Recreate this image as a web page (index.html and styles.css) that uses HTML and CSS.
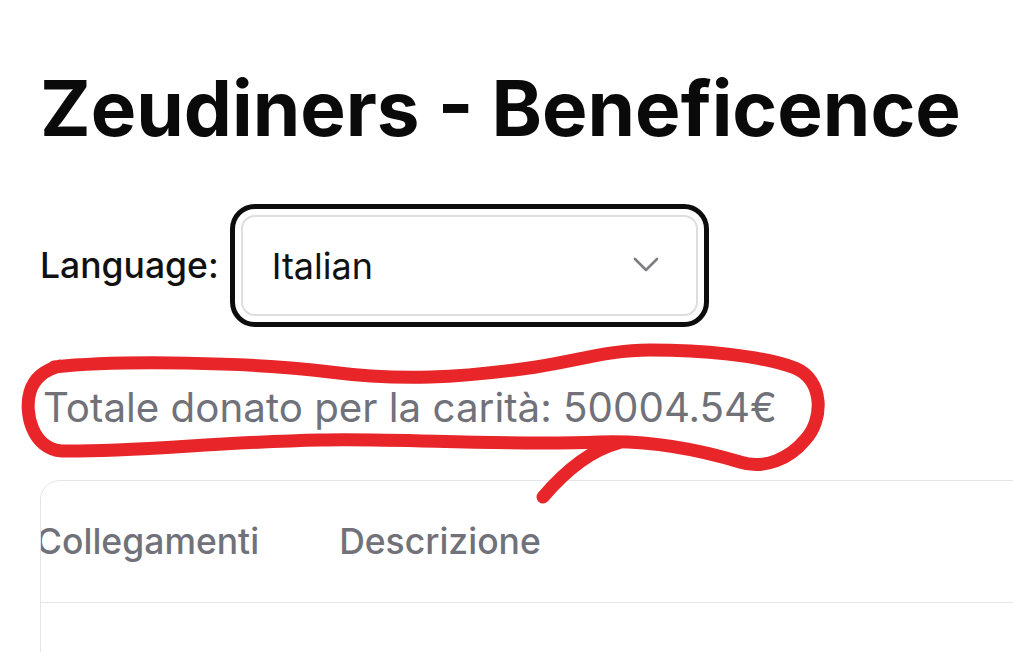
FILE: index.html
```html
<!DOCTYPE html>
<html lang="it">
<head>
<meta charset="utf-8">
<title>Zeudiners - Beneficence</title>
<link rel="stylesheet" href="styles.css">
</head>
<body>
<main class="page">
  <h1 class="title">Zeudiners - Beneficence</h1>

  <div class="lang-row">
    <label class="lang-label" for="lang">Language:</label>
    <div class="select-wrap">
      <select id="lang" class="lang-select">
        <option>Italian</option>
        <option>English</option>
      </select>
      <svg class="chevron" width="26" height="16" viewBox="0 0 26 16" aria-hidden="true">
        <path d="M2 2 L13 13 L24 2" fill="none" stroke="#7d7d82" stroke-width="2.6" stroke-linecap="round" stroke-linejoin="round"/>
      </svg>
    </div>
  </div>

  <p class="total">Totale donato per la carità: 50004.54€</p>

  <div class="card">
    <div class="scroller">
      <table class="links">
        <thead>
          <tr>
            <th>Collegamenti</th>
            <th>Descrizione</th>
          </tr>
        </thead>
        <tbody>
          <tr class="empty-row"><td></td><td></td></tr>
        </tbody>
      </table>
    </div>
  </div>
</main>

<svg class="scribble" width="1013" height="652" viewBox="0 0 1013 652" aria-hidden="true">
  <path d="M 54 367
           C 120 360, 250 362, 330 372
           C 400 381, 460 378, 536 367
           C 580 360, 610 350, 650 350
           C 700 350, 760 355, 795 368
           C 824 380, 824 420, 805 440
           C 790 458, 765 470, 740 462
           C 700 450, 650 440, 600 442
           C 500 446, 400 438, 320 440
           C 220 442, 130 452, 62 451
           C 32 449, 24 412, 30 392
           C 34 378, 44 370, 60 366"
        fill="none" stroke="#e8262a" stroke-width="13" stroke-linecap="round" stroke-linejoin="round"/>
  <path d="M 618 443 C 592 450, 566 470, 543 497"
        fill="none" stroke="#e8262a" stroke-width="13" stroke-linecap="round" stroke-linejoin="round"/>
</svg>
</body>
</html>
```

FILE: styles.css
```css
html, body {
  margin: 0;
  padding: 0;
  background: #ffffff;
  overflow: hidden;
}

body {
  font-family: Inter, "Noto Sans", "Liberation Sans", sans-serif;
  color: #0a0a0a;
  position: relative;
  width: 1013px;
  height: 652px;
}

.page {
  padding: 0 0 0 40px;
}

.title {
  margin: 63px 0 0;
  font-size: 76.4px;
  line-height: 90px;
  font-weight: 700;
  letter-spacing: 0;
  white-space: nowrap;
}

.lang-row {
  display: flex;
  align-items: center;
  margin-top: 62px;
  gap: 22px;
}

.lang-label {
  font-size: 35.5px;
  font-weight: 500;
  color: #111111;
}

.select-wrap {
  position: relative;
  width: 457px;
  height: 101px;
}

.lang-select {
  appearance: none;
  -webkit-appearance: none;
  box-sizing: border-box;
  width: 100%;
  height: 100%;
  margin: 0;
  padding: 0 0 0 29px;
  font-family: inherit;
  font-size: 36px;
  font-weight: 400;
  color: #111111;
  background: #ffffff;
  border: 2px solid #dedede;
  border-radius: 14px;
  outline: 5px solid #0d0d0d;
  outline-offset: 6px;
}

.chevron {
  position: absolute;
  right: 39px;
  top: 42px;
  pointer-events: none;
}

.total {
  margin: 62px 0 0;
  padding-left: 3px;
  font-size: 40.3px;
  line-height: 60px;
  color: #71717a;
  white-space: nowrap;
}

.card {
  margin-top: 42px;
  width: 1100px;
  height: 300px;
  border: 1.5px solid #e4e4e7;
  border-radius: 20px;
  overflow: hidden;
}

.scroller {
  overflow: hidden;
}

.links {
  width: 1200px;
  margin-left: -45px;
  border-collapse: collapse;
}

.links th {
  height: 121px;
  padding: 0 40px;
  font-size: 35.5px;
  font-weight: 500;
  color: #71717a;
  text-align: left;
  vertical-align: middle;
  white-space: nowrap;
  border-bottom: 1.5px solid #e4e4e7;
}

.links th:last-child {
  width: 100%;
}

.empty-row td {
  height: 120px;
}

.scribble {
  position: absolute;
  left: 0;
  top: 0;
  pointer-events: none;
}
```
